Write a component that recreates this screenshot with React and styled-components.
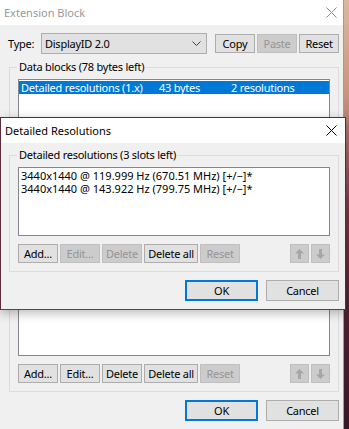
import React from 'react';
import styled, { createGlobalStyle, css } from 'styled-components';

const Global = createGlobalStyle`
  html, body { margin: 0; padding: 0; }
  body { width: 349px; height: 429px; overflow: hidden; background: #3d1b2a; }
`;

const Screen = styled.div`
  position: relative;
  width: 349px;
  height: 429px;
  overflow: hidden;
  background: linear-gradient(180deg, #dcb89e 0%, #c8957c 22%, #7a3444 50%, #4a1f30 75%, #361826 100%);
  font-family: "Noto Sans", "Open Sans", sans-serif;
  font-size: 11px;
  letter-spacing: -0.25px;
  color: #000;
`;

const Window = styled.div`
  box-sizing: border-box;
  width: 344px;
  height: 429px;
  background: #f0f0f0;
  border-right: 1px solid #a59a9a;
  display: flex;
  flex-direction: column;
`;

const Dialog = styled.div`
  position: absolute;
  left: 0;
  top: 117px;
  box-sizing: border-box;
  width: 346px;
  background: #f0f0f0;
  border: 1px solid #5c2a3a;
  border-bottom-color: #4a4a4a;
  box-shadow: 0 3px 10px rgba(0, 0, 0, 0.28);
  display: flex;
  flex-direction: column;
`;

const TitleBar = styled.div`
  flex: none;
  height: 25px;
  background: #fff;
  display: flex;
  align-items: center;
  justify-content: space-between;
  padding: 0 ${p => (p.$active ? 8 : 6)}px 0 4px;
  color: ${p => (p.$active ? '#000' : '#999')};
  font-size: 11px;
  letter-spacing: 0;
`;

const Body = styled.div`
  display: flex;
  flex-direction: column;
  padding: 0 0 8px ${p => p.$pl}px;
`;

const TypeRow = styled.div`
  display: flex;
  align-items: center;
  margin-top: 8px;
  width: 330px;
`;

const TypeLabel = styled.span`
  width: 33px;
  margin-left: -1px;
  flex: none;
`;

const Combo = styled.div`
  box-sizing: border-box;
  width: 166px;
  height: 21px;
  margin-right: 8px;
  background: #e1e1e1;
  border: 1px solid #adadad;
  display: flex;
  align-items: center;
  justify-content: space-between;
  padding: 0 5px 0 3px;
`;

const ButtonStrip = styled.div`
  display: flex;
  gap: 2px;
`;

const Button = styled.button`
  box-sizing: border-box;
  flex: none;
  width: ${p => p.$w || 40}px;
  height: ${p => p.$h || 19}px;
  margin: 0;
  padding: 0;
  font: inherit;
  letter-spacing: inherit;
  color: #000;
  background: #e1e1e1;
  border: 1px solid #adadad;
  display: flex;
  align-items: center;
  justify-content: center;
  &:disabled {
    background: #cccccc;
    border-color: #bfbfbf;
    color: #959595;
  }
  ${p => p.$default && css`border: 2px solid #0078d7;`}
`;

const Group = styled.fieldset`
  box-sizing: border-box;
  width: 330px;
  min-width: 0;
  margin: ${p => p.$mt}px 0 0;
  padding: 5px 8px 8px;
  border: 1px solid #dcdcdc;
`;

const Legend = styled.legend`
  padding: 0 2px;
  margin-left: -1px;
  line-height: 14px;
`;

const ListBox = styled.div`
  box-sizing: border-box;
  width: 312px;
  height: ${p => p.$h}px;
  background: #fff;
  border: 1px solid #828790;
  padding-top: 1px;
  overflow: hidden;
`;

const BlockRow = styled.div`
  display: grid;
  grid-template-columns: 138px 72px 1fr;
  height: 13px;
  line-height: 13px;
  padding-left: 2px;
  white-space: nowrap;
  overflow: hidden;
  ${p => p.$selected && css`background: #0078d7; color: #fff;`}
`;

const ResRow = styled.div`
  height: 13px;
  line-height: 13px;
  padding-left: 2px;
  white-space: nowrap;
  overflow: hidden;
  letter-spacing: 0;
`;

const ActionRow = styled.div`
  display: flex;
  gap: 2px;
  margin-top: 8px;
`;

const Spacer = styled.div`
  flex: 1;
`;

const DialogButtons = styled.div`
  display: flex;
  justify-content: flex-end;
  gap: 8px;
  margin-top: 8px;
  width: 330px;
`;

const CloseX = ({ color }) => (
  <svg width="11" height="11" viewBox="0 0 11 11">
    <path d="M0.5 0.5 L10.5 10.5 M10.5 0.5 L0.5 10.5" stroke={color} strokeWidth="1" fill="none" />
  </svg>
);

const Chevron = () => (
  <svg width="9" height="5" viewBox="0 0 9 5">
    <polyline points="0.5,0.5 4.5,4.5 8.5,0.5" stroke="#404040" strokeWidth="1" fill="none" />
  </svg>
);

const Arrow = ({ down }) => (
  <svg width="9" height="10" viewBox="0 0 9 10" style={down ? { transform: 'rotate(180deg)' } : undefined}>
    <path d="M4.5 0 L9 4.5 H6 V10 H3 V4.5 H0 Z" fill="#a6a6a6" />
  </svg>
);

const Actions = ({ editable }) => (
  <ActionRow>
    <Button>Add...</Button>
    <Button disabled={!editable}>Edit...</Button>
    <Button disabled={!editable}>Delete</Button>
    <Button $w={54}>Delete all</Button>
    <Button disabled>Reset</Button>
    <Spacer />
    <Button $w={19} disabled><Arrow /></Button>
    <Button $w={19} disabled><Arrow down /></Button>
  </ActionRow>
);

const OkCancel = () => (
  <DialogButtons>
    <Button $w={73} $h={21} $default>OK</Button>
    <Button $w={73} $h={21}>Cancel</Button>
  </DialogButtons>
);

export default function App() {
  return (
    <Screen>
      <Global />
      <Window>
        <TitleBar>
          <span>Extension Block</span>
          <CloseX color="#8a8a8a" />
        </TitleBar>
        <Body $pl={9}>
          <TypeRow>
            <TypeLabel>Type:</TypeLabel>
            <Combo>
              <span>DisplayID 2.0</span>
              <Chevron />
            </Combo>
            <ButtonStrip>
              <Button>Copy</Button>
              <Button disabled>Paste</Button>
              <Button>Reset</Button>
            </ButtonStrip>
          </TypeRow>
          <Group $mt={6}>
            <Legend>Data blocks (78 bytes left)</Legend>
            <ListBox $h={277}>
              <BlockRow $selected>
                <span>Detailed resolutions (1.x)</span>
                <span>43 bytes</span>
                <span>2 resolutions</span>
              </BlockRow>
            </ListBox>
            <Actions editable />
          </Group>
          <OkCancel />
        </Body>
      </Window>
      <Dialog>
        <TitleBar $active>
          <span>Detailed Resolutions</span>
          <CloseX color="#000" />
        </TitleBar>
        <Body $pl={8}>
          <Group $mt={5}>
            <Legend>Detailed resolutions (3 slots left)</Legend>
            <ListBox $h={69}>
              <ResRow>3440x1440 @ 119.999 Hz (670.51 MHz) [+/−]*</ResRow>
              <ResRow>3440x1440 @ 143.922 Hz (799.75 MHz) [+/−]*</ResRow>
            </ListBox>
            <Actions />
          </Group>
          <OkCancel />
        </Body>
      </Dialog>
    </Screen>
  );
}
